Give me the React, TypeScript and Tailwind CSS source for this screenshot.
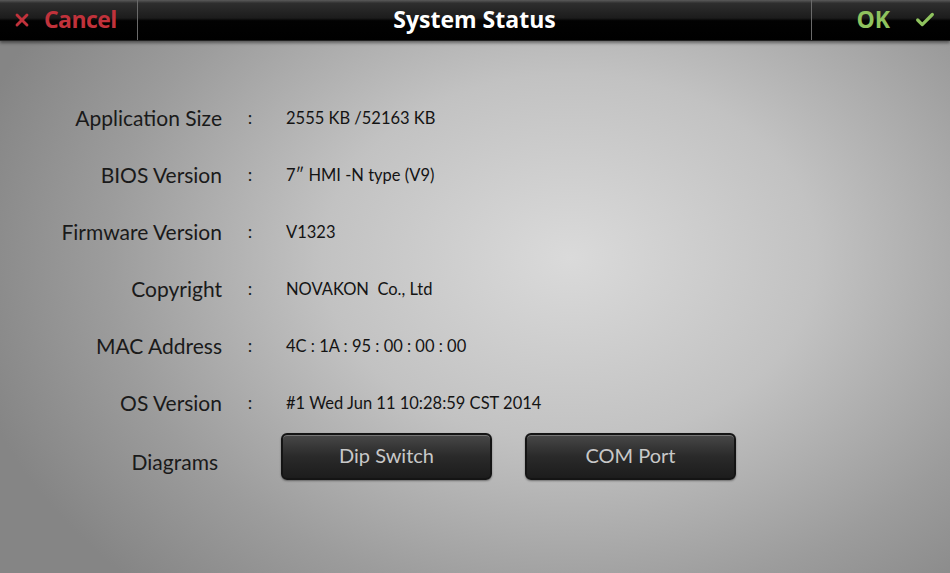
import { Check, X } from "lucide-react";

const rows: { label: string; value: string }[] = [
  { label: "Application Size", value: "2555 KB /52163 KB" },
  { label: "BIOS Version", value: "7\u2033 HMI -N type (V9)" },
  { label: "Firmware Version", value: "V1323" },
  { label: "Copyright", value: "NOVAKON  Co., Ltd" },
  { label: "MAC Address", value: "4C : 1A : 95 : 00 : 00 : 00" },
  { label: "OS Version", value: "#1 Wed Jun 11 10:28:59 CST 2014" },
];

function DiagramButton({ label }: { label: string }) {
  return (
    <button className="w-[211px] h-[47px] rounded-[6px] border-2 border-[#141414] bg-gradient-to-b from-[#484848] via-[#2a2a2a] to-[#1c1c1c] shadow-[inset_0_1px_0_rgba(255,255,255,0.25),0_1px_2px_rgba(0,0,0,0.4)] text-[20px] text-[#c8c8c8] pb-1">
      {label}
    </button>
  );
}

export default function App() {
  return (
    <div
      className="w-[950px] h-[573px] flex flex-col overflow-hidden bg-[radial-gradient(ellipse_65%_80%_at_60%_45%,#dadada_0%,#c2c2c2_40%,#9c9c9c_75%,#858585_100%)]"
      style={{ fontFamily: "Lato, 'Open Sans', sans-serif" }}
    >
      {/* title bar */}
      <div
        className="h-[41px] flex bg-[linear-gradient(to_bottom,#5a5a5a_0%,#2e2e2e_8%,#1c1c1c_45%,#020202_52%,#000_100%)] shadow-[0_2px_3px_rgba(0,0,0,0.45)] border-b border-[#222]"
        style={{ fontFamily: "'Open Sans', sans-serif" }}
      >
        <button className="w-[138px] flex items-center gap-[12px] pl-[12px] border-r border-[#6a6a6a] text-[#c0323b]">
          <X className="w-[20px] h-[20px]" strokeWidth={3.4} />
          <span className="text-[23px] font-bold tracking-tight pb-[2px]">Cancel</span>
        </button>
        <div className="flex-1 flex items-center justify-center text-white text-[23px] font-bold pb-[2px]">
          System Status
        </div>
        <button className="w-[139px] flex items-center justify-end gap-[24px] pr-[14px] border-l border-[#6a6a6a] text-[#8fc35e]">
          <span className="text-[23px] font-bold pb-[2px]">OK</span>
          <Check className="w-[22px] h-[22px]" strokeWidth={3.5} />
        </button>
      </div>

      {/* info rows */}
      <div className="pt-[52px] grid grid-cols-[222px_54px_1fr] auto-rows-[57px] items-center">
        {rows.map((r) => (
          <div key={r.label} className="contents">
            <div className="text-right text-[21px] text-[#1a1a1a] pb-2">{r.label}</div>
            <div className="text-center text-[18px] text-[#1a1a1a] pl-[2px] pb-2">:</div>
            <div className="pl-[10px] text-[16.5px] text-[#141414] pb-[6px] whitespace-pre">{r.value}</div>
          </div>
        ))}
        <div className="text-right text-[21px] text-[#1a1a1a] pr-[4px] pb-1">Diagrams</div>
        <div />
        <div className="flex gap-[33px] ml-[5px] pb-[14px]">
          <DiagramButton label="Dip Switch" />
          <DiagramButton label="COM Port" />
        </div>
      </div>
    </div>
  );
}
